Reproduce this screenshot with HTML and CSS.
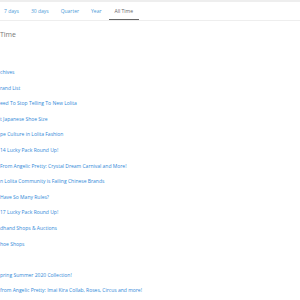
FILE: index.html
```html
<!DOCTYPE html>
<html lang="en">
<head>
	<meta charset="UTF-8">
	<title>Top posts</title>
	<link rel="stylesheet" href="styles.css">
</head>
<body>
<div class="topbar"></div>
<ul class="tabs">
  <li><a href="#">7 days</a></li>
  <li><a href="#">30 days</a></li>
  <li><a href="#">Quarter</a></li>
  <li><a href="#">Year</a></li>
  <li class="current"><a href="#">All Time</a></li>
</ul>
<h2 class="title">Time</h2>
<ul class="posts">
  <li><a href="#">chives</a></li>
  <li><a href="#">rand List</a></li>
  <li><a href="#">eed To Stop Telling To New Lolita</a></li>
  <li><a href="#">t Japanese Shoe Size</a></li>
  <li><a href="#">pe Culture in Lolita Fashion</a></li>
  <li><a href="#">14 Lucky Pack Round Up!</a></li>
  <li><a href="#">From Angelic Pretty: Crystal Dream Carnival and More!</a></li>
  <li><a href="#">n Lolita Community is Failing Chinese Brands</a></li>
  <li><a href="#">Have So Many Rules?</a></li>
  <li><a href="#">17 Lucky Pack Round Up!</a></li>
  <li><a href="#">dhand Shops &amp; Auctions</a></li>
  <li><a href="#">hoe Shops</a></li>
  <li class="empty"></li>
  <li><a href="#">pring Summer 2020 Collection!</a></li>
  <li><a href="#">from Angelic Pretty: Imai Kira Collab, Roses, Circus and more!</a></li>
</ul>
</body>
</html>
```

FILE: styles.css
```css
* {
  margin: 0;
  padding: 0;
}

body {
  font-family: "Open Sans", sans-serif;
  font-size: 5px;
  background-color: #fff;
}

ul {
  list-style: none;
}

a {
  text-decoration: none;
}

.topbar {
  height: 2px;
  background-color: #eee;
}

.tabs {
  display: flex;
  height: 18px;
  padding-left: 4px;
  border-bottom: 1px solid #eee;
}

.tabs li {
  display: flex;
  align-items: center;
  padding: 0 6px;
}

.tabs li:first-child {
  padding-left: 0;
}

.tabs a {
  color: #4a9ad8;
}

.tabs li.current {
  border-bottom: 1px solid #666;
  margin-left: 1px;
}

.tabs li.current a {
  color: #666;
}

.title {
  font-size: 7px;
  font-weight: normal;
  color: #777;
  margin-top: 9px;
}

.posts {
  margin-top: 26px;
}

.posts li {
  height: 15.6px;
  line-height: 15.6px;
}

.posts a {
  color: #3189d8;
}
```
